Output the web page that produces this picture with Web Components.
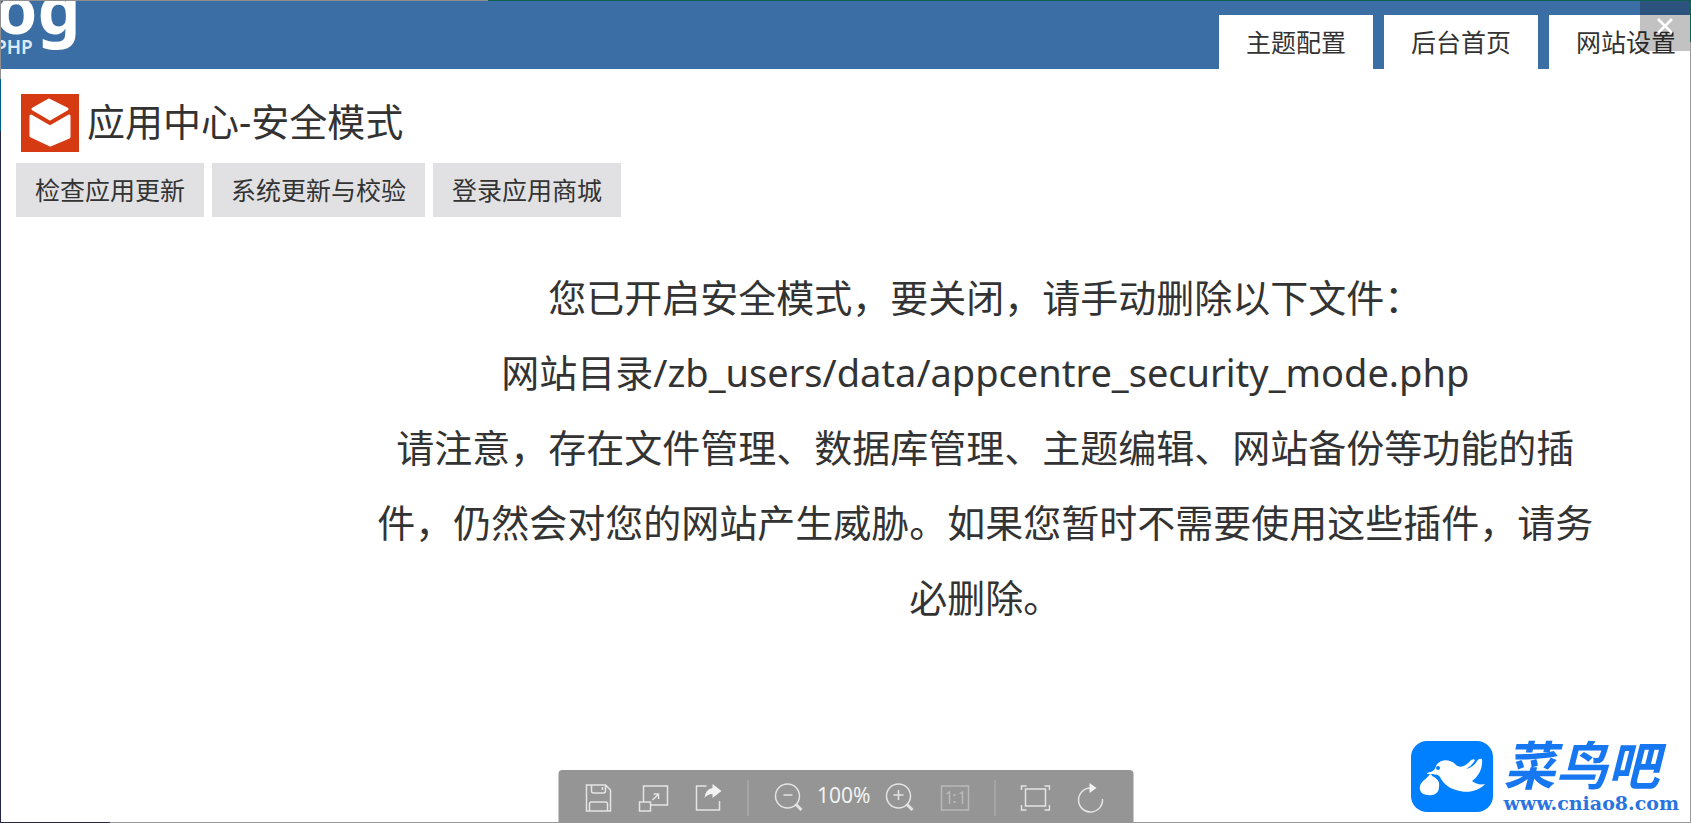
<!DOCTYPE html>
<html lang="zh-CN">
<head>
<meta charset="utf-8">
<title>应用中心-安全模式</title>
<style>
  html, body {
    height: 100%;
    margin: 0;
  }

  body {
    background: #fff;
    color: #333;
    font-family: "Noto Sans", "Noto Sans CJK SC", sans-serif;
    overflow: hidden;
  }
</style>
</head>
<body>
<image-viewer>
  <admin-header>
    <nav-tab href="#theme">主题配置</nav-tab>
    <nav-tab href="#home">后台首页</nav-tab>
    <nav-tab href="#settings">网站设置</nav-tab>
  </admin-header>
  <app-title>应用中心-安全模式</app-title>
  <sub-menu>
    <menu-item href="#check">检查应用更新</menu-item>
    <menu-item href="#verify">系统更新与校验</menu-item>
    <menu-item href="#login">登录应用商城</menu-item>
  </sub-menu>
  <security-notice>
    <p>您已开启安全模式，要关闭，请手动删除以下文件：</p>
    <p>网站目录/zb_users/data/appcentre_security_mode.php</p>
    <p>请注意，存在文件管理、数据库管理、主题编辑、网站备份等功能的插件，仍然会对您的网站产生威胁。如果您暂时不需要使用这些插件，请务必删除。</p>
  </security-notice>
  <close-button slot="overlay"></close-button>
  <site-brand slot="overlay"></site-brand>
  <viewer-toolbar slot="overlay"></viewer-toolbar>
</image-viewer>

<script>
class ImageViewer extends HTMLElement {
  constructor() {
    super();
    this.attachShadow({mode: 'open'}).innerHTML = `
      <style>
      :host {
        display: flex;
        position: relative;
        box-sizing: border-box;
        min-height: 100vh;
        padding: 1px;
        background:
          linear-gradient(90deg, #8f8f8f 488px, #0e6050 488px) top / 100% 1px no-repeat,
          linear-gradient(90deg, #26264a 110px, #999 110px) bottom / 100% 1px no-repeat,
          linear-gradient(#8f8f8f 79px, #00608c 79px 131px, #26264a 131px) left / 1px 100% no-repeat,
          linear-gradient(#0e6050 42px, #999 42px) right / 1px 100% no-repeat;
        overflow: hidden;
      }

      main {
        flex: 1;
        min-width: 0;
        background: #fff;
        overflow: hidden;
      }
      </style>
      <main><slot></slot></main>
      <slot name="overlay"></slot>
    `;
  }
}

class AdminHeader extends HTMLElement {
  constructor() {
    super();
    this.attachShadow({mode: 'open'}).innerHTML = `
      <style>
      :host {
        display: flex;
        justify-content: space-between;
        height: 68px;
        background: #3b6ea5;
        overflow: hidden;
      }

      nav {
        display: flex;
        align-items: flex-end;
        gap: 11px;
        margin-right: -13px;
      }
      </style>
      <svg width="80" height="60" viewBox="0 0 80 60" fill="#fff" font-family="Noto Sans">
        <text x="-6" y="33" font-size="68" font-weight="700">og</text>
        <text x="-6" y="53" font-size="19" font-weight="600" fill="#dcebf7">PHP</text>
      </svg>
      <nav><slot></slot></nav>
    `;
  }
}

class NavTab extends HTMLElement {
  constructor() {
    super();
    this.attachShadow({mode: 'open'}).innerHTML = `
      <style>
      :host {
        display: block;
        flex: none;
      }

      a {
        display: block;
        padding: 0 27px;
        background: #fff;
        color: #333;
        font-size: 25px;
        line-height: 54px;
        text-decoration: none;
      }
      </style>
      <a href="${this.getAttribute('href')}"><slot></slot></a>
    `;
  }
}

class AppTitle extends HTMLElement {
  constructor() {
    super();
    this.attachShadow({mode: 'open'}).innerHTML = `
      <style>
      :host {
        display: flex;
        align-items: flex-start;
        gap: 8px;
        padding: 25px 20px 0;
      }

      h1 {
        margin: 0;
        font-size: 38px;
        font-weight: 400;
        line-height: 54px;
      }
      </style>
      <svg width="58" height="58" viewBox="0 0 58 58">
        <rect width="58" height="58" fill="#d63a12"/>
        <g fill="#fff" stroke="#fff" stroke-width="3" stroke-linejoin="round">
          <path d="M28 6 46 15 29 25 12 15Z"/>
          <path d="M10 22 29 33 48 22V43L29 51 10 42Z"/>
        </g>
      </svg>
      <h1><slot></slot></h1>
    `;
  }
}

class SubMenu extends HTMLElement {
  constructor() {
    super();
    this.attachShadow({mode: 'open'}).innerHTML = `
      <style>
      :host {
        display: flex;
        gap: 8px;
        padding: 11px 15px 0;
      }
      </style>
      <slot></slot>
    `;
  }
}

class MenuItem extends HTMLElement {
  constructor() {
    super();
    this.attachShadow({mode: 'open'}).innerHTML = `
      <style>
      :host {
        display: block;
      }

      a {
        display: block;
        padding: 0 19px;
        background: #e1e1e3;
        color: #333;
        font-size: 25px;
        line-height: 54px;
        text-decoration: none;
      }
      </style>
      <a href="${this.getAttribute('href')}"><slot></slot></a>
    `;
  }
}

class SecurityNotice extends HTMLElement {
  constructor() {
    super();
    this.attachShadow({mode: 'open'}).innerHTML = `
      <style>
      :host {
        display: block;
        margin: 43px 92px 0 22%;
        font-size: 38px;
        line-height: 75px;
        text-align: center;
      }

      ::slotted(p) {
        margin: 0;
      }
      </style>
      <slot></slot>
    `;
  }
}

class CloseButton extends HTMLElement {
  constructor() {
    super();
    this.attachShadow({mode: 'open'}).innerHTML = `
      <style>
      :host {
        position: absolute;
        top: 1px;
        right: 1px;
      }

      button {
        display: block;
        width: 50px;
        height: 50px;
        padding: 0;
        border: none;
        background: rgba(0, 0, 0, .24);
        cursor: pointer;
      }

      svg {
        display: block;
        margin: auto;
      }
      </style>
      <button type="button" aria-label="关闭">
        <svg width="16" height="16" viewBox="0 0 16 16" stroke="#fff" stroke-width="2.5">
          <path d="M1 1 15 15M15 1 1 15"/>
        </svg>
      </button>
    `;
  }
}

class SiteBrand extends HTMLElement {
  constructor() {
    super();
    this.attachShadow({mode: 'open'}).innerHTML = `
      <style>
      :host {
        position: absolute;
        right: 12px;
        bottom: 9px;
        display: flex;
        align-items: center;
        gap: 9px;
      }

      .name {
        color: #1677f0;
        font-size: 52px;
        font-style: italic;
        font-weight: 700;
        line-height: 54px;
      }

      .url {
        color: #2a74e0;
        font-family: "DejaVu Serif", serif;
        font-size: 19px;
        font-weight: 700;
        line-height: 22px;
      }
      </style>
      <svg width="84" height="73" viewBox="0 0 84 73">
        <rect x="1" y="1" width="82" height="71" rx="16" fill="#0080ff"/>
        <g fill="#fff">
          <path d="M17 33C22 32 25 30 26 26C29 19 40 18 46 25C50 28 55 27 60 21Q63 18 65 20Q62 26 56 29Q64 27 67 21Q69 18 72 19C73 28 69 36 62 41C66 44 70 45 75 44C69 51 57 54 46 50C38 48 33 43 30 37C28 34 24 34 17 34Z"/>
          <path d="M20 34C27 37 30 41 29 47C29 53 24 56 18 55C12 55 9 51 10 46C11 41 17 39 20 34Z"/>
        </g>
        <path d="M22 35C27 37 31 41 31 48" fill="none" stroke="#0080ff" stroke-width="1.500"/>
        <circle cx="28" cy="28" r="2" fill="#0080ff"/>
      </svg>
      <div>
        <div class="name">菜鸟吧</div>
        <div class="url">www.cniao8.com</div>
      </div>
    `;
  }
}

class ViewerToolbar extends HTMLElement {
  constructor() {
    super();
    this.attachShadow({mode: 'open'}).innerHTML = `
      <style>
      :host {
        position: absolute;
        bottom: 0;
        left: 50%;
        transform: translateX(-50%);
        display: flex;
        align-items: center;
        gap: 23px;
        box-sizing: border-box;
        height: 53px;
        padding: 2px 28px 0 24px;
        border-radius: 4px 4px 0 0;
        background: #959595;
        color: #f2f2f2;
      }

      button {
        display: block;
        width: 32px;
        height: 32px;
        padding: 0;
        border: none;
        background: none;
        color: #e4e4e4;
        cursor: pointer;
      }

      button:disabled {
        color: #b9b9b9;
      }

      svg {
        display: block;
        fill: none;
        stroke: currentColor;
        stroke-width: 1.5;
      }

      .zoom {
        display: flex;
        align-items: center;
        gap: 14px;
      }

      output {
        width: 53px;
        font-size: 21px;
        line-height: 28px;
        text-align: center;
        padding-bottom: 6px;
      }

      i {
        width: 1px;
        height: 36px;
        background: #b4b4b4;
      }
      </style>
      <button type="button" aria-label="保存">
        <svg width="32" height="32" viewBox="0 0 32 32">
          <path d="M4 3H23L28 8V29H4ZM9 3V9Q9 11 11 11H21Q23 11 23 9V3M7 29V22Q7 20 9 20H23Q25 20 25 22V29M20 5V8"/>
        </svg>
      </button>
      <button type="button" aria-label="查看原图">
        <svg width="32" height="32" viewBox="0 0 32 32">
          <path d="M6 20V4H30V23H13M2 20H13V29H2ZM15 18 21 12M16 12H21V17"/>
        </svg>
      </button>
      <button type="button" aria-label="分享">
        <svg width="32" height="32" viewBox="0 0 32 32">
          <path d="M14 4H4V28H27V19"/>
          <path d="M20 2 29 9 20 16V12Q15 12 12 16Q13 7 20 6Z" fill="#f2f2f2" stroke="none"/>
        </svg>
      </button>
      <i></i>
      <div class="zoom">
        <button type="button" aria-label="缩小">
          <svg width="32" height="32" viewBox="0 0 32 32">
            <circle cx="16" cy="14" r="12"/>
            <path d="M12 13H21"/>
            <path d="M24 22 30 28" stroke-width="3"/>
          </svg>
        </button>
        <output>100%</output>
        <button type="button" aria-label="放大">
          <svg width="32" height="32" viewBox="0 0 32 32">
            <circle cx="14" cy="14" r="12"/>
            <path d="M9 13H19M14 8V18"/>
            <path d="M22 22 28 28" stroke-width="3"/>
          </svg>
        </button>
      </div>
      <button type="button" aria-label="实际大小" disabled>
        <svg width="32" height="32" viewBox="0 0 32 32">
          <path d="M2 4H29V28H2ZM7 12 10 10V22M20 12 23 10V22"/>
          <path d="M15 12V14M15 19V21" stroke-width="2"/>
        </svg>
      </button>
      <i></i>
      <button type="button" aria-label="全屏">
        <svg width="32" height="32" viewBox="0 0 32 32">
          <path d="M7 7H27V24H7ZM3 8V4H8M26 4H31V8M31 23V28H26M8 28H3V23"/>
        </svg>
      </button>
      <button type="button" aria-label="旋转">
        <svg width="32" height="32" viewBox="0 0 32 32">
          <path d="M17 6A12 12 0 1 0 29 17"/>
          <path d="M16 1 23 6 16 11Z" fill="#f2f2f2" stroke="none"/>
        </svg>
      </button>
    `;
  }
}

customElements.define('image-viewer', ImageViewer);
customElements.define('admin-header', AdminHeader);
customElements.define('nav-tab', NavTab);
customElements.define('app-title', AppTitle);
customElements.define('sub-menu', SubMenu);
customElements.define('menu-item', MenuItem);
customElements.define('security-notice', SecurityNotice);
customElements.define('close-button', CloseButton);
customElements.define('site-brand', SiteBrand);
customElements.define('viewer-toolbar', ViewerToolbar);
</script>
</body>
</html>
